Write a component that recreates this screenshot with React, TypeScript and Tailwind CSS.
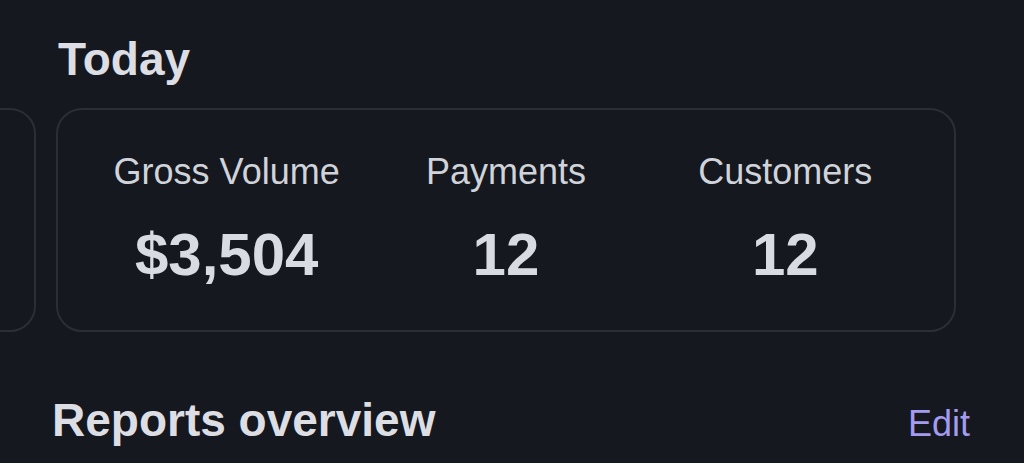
import React from 'react';

const stats = [
  { label: 'Gross Volume', value: '$3,504' },
  { label: 'Payments', value: '12' },
  { label: 'Customers', value: '12' },
];

const StatCell: React.FC<{ label: string; value: string }> = ({ label, value }) => (
  <div className="flex flex-col items-center">
    <span className="text-[36px] leading-none text-[#d0d3da]">{label}</span>
    <span className="mt-[35px] text-[60px] leading-none font-bold text-[#d8dbe2]">{value}</span>
  </div>
);

export default function App() {
  return (
    <div
      className="h-[463px] w-[1024px] overflow-hidden bg-[#15181e]"
      style={{ fontFamily: '"Liberation Sans", Arial, sans-serif' }}
    >
      <h2 className="pt-[36px] pl-[58px] text-[46px] leading-none font-bold text-[#dcdee4]">Today</h2>

      <div className="mt-[26px] flex gap-[20px]">
        <div className="-ml-[164px] h-[224px] w-[200px] shrink-0 rounded-[26px] border-2 border-[#2a2e36]" />
        <div className="grid h-[224px] w-[900px] shrink-0 grid-cols-3 rounded-[26px] border-2 border-[#2a2e36] pt-[44px] pl-[29px] pr-[29px]">
          {stats.map(s => (
            <StatCell key={s.label} label={s.label} value={s.value} />
          ))}
        </div>
      </div>

      <div className="mt-[65px] flex items-baseline justify-between pl-[52px] pr-[54px]">
        <h2 className="text-[46px] leading-none font-bold text-[#dcdee4]">Reports overview</h2>
        <button className="text-[36px] leading-none text-[#a29bf0]">Edit</button>
      </div>
    </div>
  );
}
